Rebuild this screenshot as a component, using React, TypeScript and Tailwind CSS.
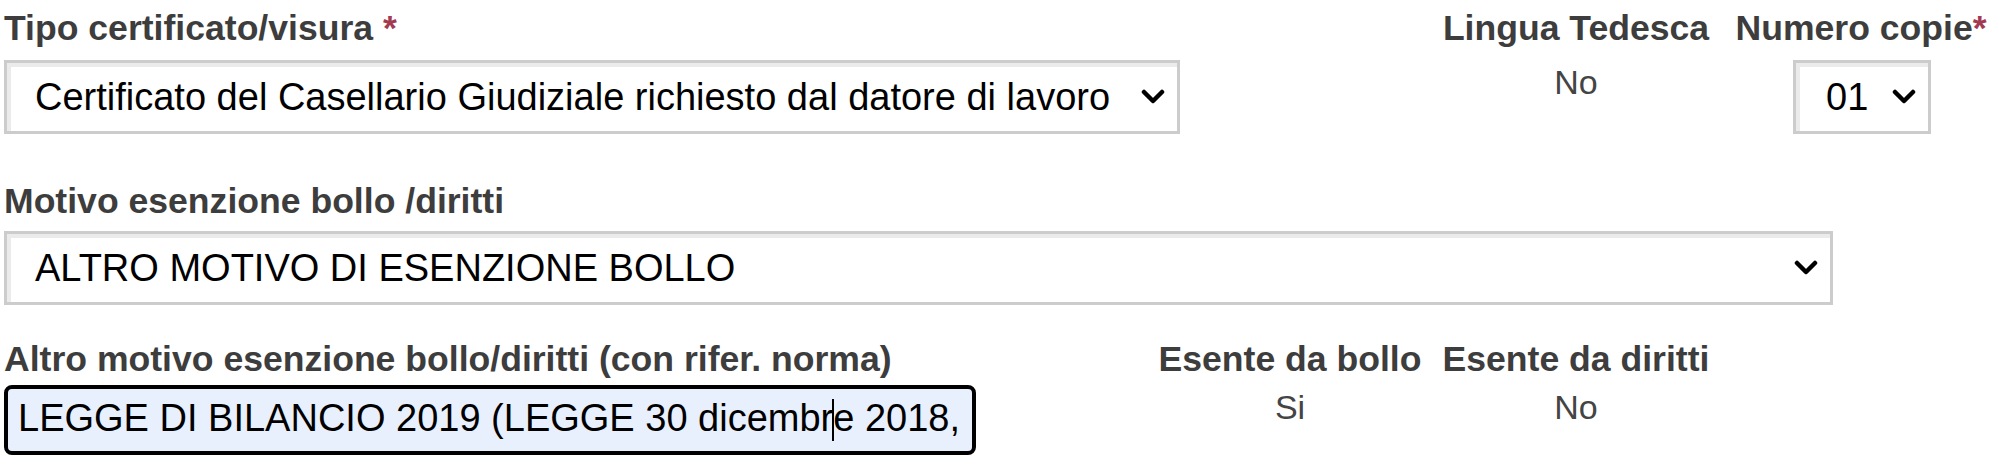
import React from "react";

const Chevron = () => (
  <svg width="24" height="16" viewBox="0 0 24 16" className="shrink-0">
    <polyline points="3,3 12,12 21,3" fill="none" stroke="#000" strokeWidth="4.5" strokeLinecap="round" strokeLinejoin="round" />
  </svg>
);

const Select = ({ text, className, textClass }: { text: string; className: string; textClass?: string }) => (
  <div
    className={`flex items-center h-[74px] border-[3px] border-[#cccccc] bg-white shadow-[inset_4px_4px_0_#ebebeb] ${className}`}
  >
    <span className={`whitespace-nowrap text-[38px] text-black leading-none ${textClass ?? ""}`}>{text}</span>
    <span className="ml-auto pr-[12px] flex items-center">
      <Chevron />
    </span>
  </div>
);

export default function App() {
  const font = { fontFamily: '"Liberation Sans", Arial, sans-serif' };
  const label = "h-[40px] leading-[40px] text-[35.6px] font-bold text-[#3d3d3d] whitespace-nowrap";
  return (
    <div className="w-[2000px] h-[472px] bg-white overflow-hidden" style={font}>
      {/* Row 1 */}
      <div className="flex items-start pt-[8px]">
        <div className="w-[1430px] pl-[4px]">
          <div className={label}>
            Tipo certificato/visura <span className="text-[#a23a52]">*</span>
          </div>
          <Select
            text="Certificato del Casellario Giudiziale richiesto dal datore di lavoro"
            className="mt-[12px] w-[1176px] pl-[28px]"
          />
        </div>
        <div className="w-[292px] flex flex-col items-center">
          <div className={label}>Lingua Tedesca</div>
          <div className="mt-[14px] h-[40px] leading-[40px] text-[34px] text-[#444444]">No</div>
        </div>
        <div className="w-[278px] flex flex-col items-center">
          <div className={label}>
            Numero copie<span className="text-[#a23a52]">*</span>
          </div>
          <Select text="01" className="mt-[12px] w-[138px] pl-[30px] ml-[2px]" />
        </div>
      </div>

      {/* Row 2 */}
      <div className="pl-[4px] mt-[47px]">
        <div className={label}>Motivo esenzione bollo /diritti</div>
        <Select text="ALTRO MOTIVO DI ESENZIONE BOLLO" className="mt-[10px] w-[1829px] pl-[28px]" />
      </div>

      {/* Row 3 */}
      <div className="flex items-start mt-[34px]">
        <div className="w-[1150px] pl-[4px]">
          <div className={label}>Altro motivo esenzione bollo/diritti (con rifer. norma)</div>
          <div className="mt-[6px] w-[972px] h-[70px] border-[4px] border-black rounded-[8px] bg-[#e8f0fe] flex items-center pl-[10px] overflow-hidden">
            <span className="whitespace-nowrap text-[38px] leading-none text-black">
              LEGGE DI BILANCIO 2019 (LEGGE 30 dicembr
              <span className="inline-block w-[2px] h-[42px] bg-black align-middle -mx-[1px]" />
              e 2018,
            </span>
          </div>
        </div>
        <div className="w-[280px] flex flex-col items-center">
          <div className={label}>Esente da bollo</div>
          <div className="mt-[8px] h-[40px] leading-[40px] text-[34px] text-[#444444]">Si</div>
        </div>
        <div className="w-[292px] flex flex-col items-center">
          <div className={label}>Esente da diritti</div>
          <div className="mt-[8px] h-[40px] leading-[40px] text-[34px] text-[#444444]">No</div>
        </div>
      </div>
    </div>
  );
}
